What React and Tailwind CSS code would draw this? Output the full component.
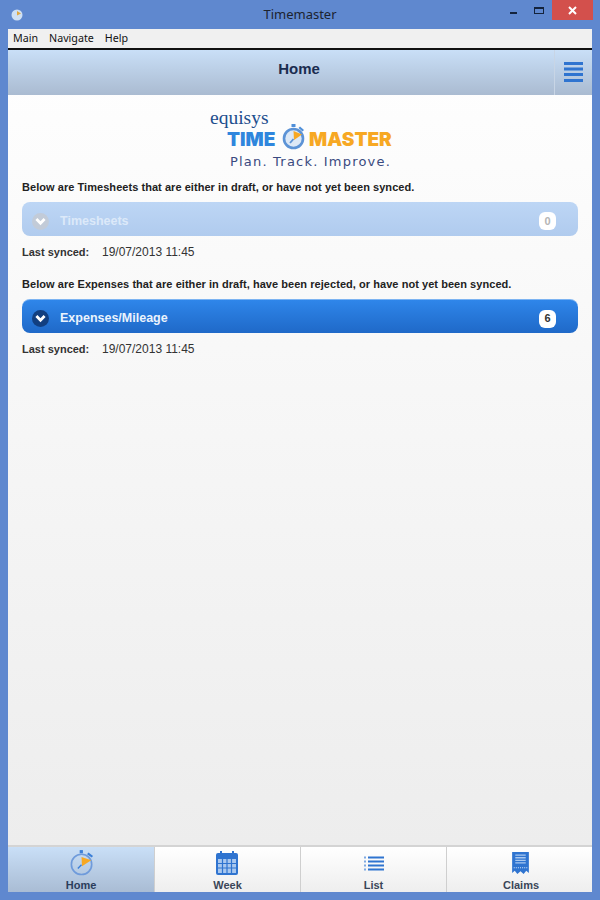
const arial = { fontFamily: '"Liberation Sans", Arial, sans-serif' };
const noto = { fontFamily: '"Noto Sans", sans-serif' };

function Stopwatch({ className }) {
  return (
    <svg viewBox="0 0 26 28" className={className}>
      <rect x="10.5" y="0" width="3.5" height="3.5" fill="#3b7fd8" />
      <path d="M20 2.5 L25 6.5 L23.5 8 L18.5 4.5 Z" fill="#3b7fd8" />
      <circle cx="12.5" cy="15.5" r="11" fill="none" stroke="#6f9bdb" strokeWidth="1.8" />
      <path d="M12.5 7.5 L23 11 L13 17.5 Z" fill="#f7a823" />
      <path d="M12.5 16 L8.5 20" stroke="#3b7fd8" strokeWidth="1.6" />
    </svg>
  );
}

function LogoWatch({ className }) {
  return (
    <svg viewBox="0 0 24 26" className={className}>
      <rect x="9.5" y="0" width="4" height="3" fill="#4f8fd9" />
      <path d="M18 2.5 L22 6 L20.5 7.5 L16.5 4 Z" fill="#4f8fd9" />
      <circle cx="11.5" cy="14.5" r="9.5" fill="#dce8f6" stroke="#5c93d6" strokeWidth="2.6" />
      <path d="M11.5 7 L20 10.5 L12 16 Z" fill="#f7a823" />
      <path d="M11.5 15 L8 19" stroke="#5c93d6" strokeWidth="1.8" />
    </svg>
  );
}

function CalendarIcon() {
  return (
    <svg viewBox="0 0 22 24" className="w-[22px] h-[24px]">
      <rect x="0" y="2" width="22" height="22" rx="2" fill="#2f74d0" />
      <rect x="4" y="0" width="2" height="4" fill="#2f74d0" />
      <rect x="16" y="0" width="2" height="4" fill="#2f74d0" />
      <path d="M2 8H20V22H2Z" fill="#a9c8ef" />
      <path d="M2 12.5H20M2 17H20M6.5 8V22M11 8V22M15.5 8V22" stroke="#2f74d0" strokeWidth="1.2" />
    </svg>
  );
}

function ListIcon() {
  return (
    <svg viewBox="0 0 20 15" className="w-[20px] h-[15px]">
      <path d="M4 1.5H20M4 5.5H20M4 9.5H20M4 13.5H20" stroke="#2f74d0" strokeWidth="2.2" />
      <path d="M0 1.5H2M0 5.5H2M0 9.5H2M0 13.5H2" stroke="#7fa9e2" strokeWidth="1.8" />
    </svg>
  );
}

function ClaimsIcon() {
  return (
    <svg viewBox="0 0 16 22" className="w-[17px] h-[23px]">
      <path d="M0 0H16V20L13.5 18L11 21L8 18.5L5 21L2.5 18L0 20Z" fill="#2f74d0" />
      <path d="M3 3H13M3 5.5H13M3 8H13M3 10.5H13" stroke="#a9c8ef" strokeWidth="1.2" />
      <path d="M1.5 15H14.5" stroke="#cfe0f6" strokeWidth="1" strokeDasharray="1 1" />
    </svg>
  );
}

function ChevronCircle({ className }) {
  return (
    <div className={`w-[17px] h-[17px] rounded-full flex items-center justify-center ${className}`}>
      <svg viewBox="0 0 10 8" className="w-[11px] h-[9px]">
        <path d="M1.3 1.8 L5 5.5 L8.7 1.8" fill="none" stroke="white" strokeWidth="2.6" />
      </svg>
    </div>
  );
}

function Section({ intro, title, count, disabled }) {
  return (
    <div>
      <p className="text-[11px] leading-[14px] font-bold text-[#222] tracking-[0.05px]">{intro}</p>
      <div
        className={
          disabled
            ? 'mt-[8px] h-[34px] rounded-[8px] flex items-center pt-[4px] pl-[10px] pr-[22px] bg-gradient-to-b from-[#bdd6f5] to-[#b0cbee]'
            : 'mt-[8px] h-[34px] rounded-[8px] flex items-center pt-[4px] pl-[10px] pr-[22px] bg-gradient-to-b from-[#2f86ea] to-[#1f69c8] border-t border-[#7db4f2]'
        }
      >
        <ChevronCircle className={disabled ? 'bg-[#c2cbd8]' : 'bg-[#123f80]'} />
        <span className={`ml-[11px] flex-1 text-[12.5px] font-bold ${disabled ? 'text-[#dce9f9]' : 'text-[#eaf3fd]'}`}>{title}</span>
        <span className={`w-[17px] h-[18px] rounded-[6px] bg-white flex items-center justify-center text-[11px] font-bold ${disabled ? 'text-[#b5b5b5]' : 'text-[#333]'}`}>{count}</span>
      </div>
      <div className="mt-[9px] flex text-[12px] leading-[14px] text-[#333]">
        <span className="w-[80px] text-[11px] font-bold">Last synced:</span>
        <span>19/07/2013 11:45</span>
      </div>
    </div>
  );
}

function Tab({ label, active, last, shift, children }) {
  return (
    <div
      className={`flex justify-center ${last ? '' : 'border-r border-[#cfcfcf]'} ${
        active ? 'bg-gradient-to-b from-[#c9dff7] to-[#a9bcd4]' : 'bg-gradient-to-b from-white to-[#eeeeee]'
      }`}
    >
      <div className={`flex flex-col items-center ${shift || ''}`}>
        <div className="h-[32px] flex items-center justify-center">{children}</div>
        <span className={`text-[11px] leading-[13px] font-bold ${active ? 'text-[#2b3d5c]' : 'text-[#3a4658]'}`}>{label}</span>
      </div>
    </div>
  );
}

export default function App() {
  return (
    <div style={arial} className="w-[600px] h-[900px] bg-[#5f88cf] flex flex-col px-[8px] pb-[8px] overflow-hidden">
      {/* title bar */}
      <div className="h-[29px] grid grid-cols-[1fr_auto_1fr] shrink-0">
        <div className="flex items-center">
          <svg viewBox="0 0 12 12" className="ml-[3px] mt-[1px] w-[12px] h-[12px]">
            <circle cx="6" cy="6" r="5.5" fill="#cfe0f4" />
            <path d="M6 2 L10 4.5 L6 6.5 Z" fill="#e0a840" />
          </svg>
        </div>
        <span className="self-center text-[13px] text-[#1c2330]" style={noto}>Timemaster</span>
        <div className="flex items-start justify-end -mr-[1px]">
          <div className="w-[7px] h-[2px] bg-[#14233c] mt-[12px] mr-[17px]" />
          <div className="w-[10px] h-[7px] border border-[#14233c] border-t-2 mt-[7px] mr-[8px]" />
          <div className="w-[41px] h-[20px] bg-[#d3504c] flex items-center justify-center">
            <svg viewBox="0 0 9 9" className="w-[9px] h-[9px]">
              <path d="M1 1L8 8M8 1L1 8" stroke="white" strokeWidth="2" />
            </svg>
          </div>
        </div>
      </div>

      {/* window content */}
      <div className="flex-1 flex flex-col bg-gradient-to-b from-white to-[#ececec] min-h-0">
        <div className="h-[19px] bg-[#f0f0f0] flex items-center pl-[5px] gap-[11px] text-[10.7px] text-[#111] shrink-0" style={noto}>
          <span>Main</span>
          <span>Navigate</span>
          <span>Help</span>
        </div>
        <div className="h-[2px] bg-[#111] shrink-0" />

        <div className="h-[45px] flex items-center shrink-0 bg-gradient-to-b from-[#c9dff7] to-[#aabbd1]">
          <h1 className="flex-1 text-center text-[15px] font-bold text-[#1a2c50] pl-[36px] pb-[7px]">Home</h1>
          <div className="w-[38px] h-full border-l border-[#c8d5e5] flex items-center justify-center">
            <svg viewBox="0 0 19 20" className="w-[19px] h-[20px] mb-[2px]">
              <path d="M0 1.5H19M0 7H19M0 12.5H19M0 18.5H19" stroke="#2f74d0" strokeWidth="2.8" />
            </svg>
          </div>
        </div>

        <div className="flex-1 min-h-0 px-[14px]">
          {/* logo */}
          <div className="relative h-[74px] w-full">
            <span className="absolute left-[188px] top-[13px] text-[19.5px] leading-[20px] text-[#1d4f8e]" style={{ fontFamily: '"Liberation Serif", serif' }}>equisys</span>
            <span className="absolute left-[205px] top-[32px] font-black text-[19px] leading-[26px] text-[#2f86dd]" style={{ fontFamily: 'Inter, sans-serif' }}>TIME</span>
            <LogoWatch className="absolute left-[260px] top-[29px] w-[24px] h-[26px]" />
            <span className="absolute left-[287px] top-[32px] font-black text-[19px] leading-[26px] text-[#f7a823]" style={{ fontFamily: 'Inter, sans-serif' }}>MASTER</span>
            <span className="absolute left-[208px] top-[59px] text-[13px] leading-[16px] tracking-[1.2px] text-[#3a4a80]" style={{ fontFamily: '"DejaVu Sans", sans-serif' }}>Plan. Track. Improve.</span>
          </div>

          <div className="mt-[11px] flex flex-col gap-[18px]">
            <Section intro="Below are Timesheets that are either in draft, or have not yet been synced." title="Timesheets" count="0" disabled />
            <Section intro="Below are Expenses that are either in draft, have been rejected, or have not yet been synced." title="Expenses/Mileage" count="6" />
          </div>
        </div>

        {/* bottom tabs */}
        <div className="h-[47px] grid grid-cols-[147px_146px_146px_145px] shrink-0 border-t-2 border-[#d4d4d4]">
          <Tab label="Home" active><Stopwatch className="w-[24px] h-[26px] ml-[2px]" /></Tab>
          <Tab label="Week"><CalendarIcon /></Tab>
          <Tab label="List"><ListIcon /></Tab>
          <Tab label="Claims" shift="ml-[3px]" last><ClaimsIcon /></Tab>
        </div>
      </div>
    </div>
  );
}
